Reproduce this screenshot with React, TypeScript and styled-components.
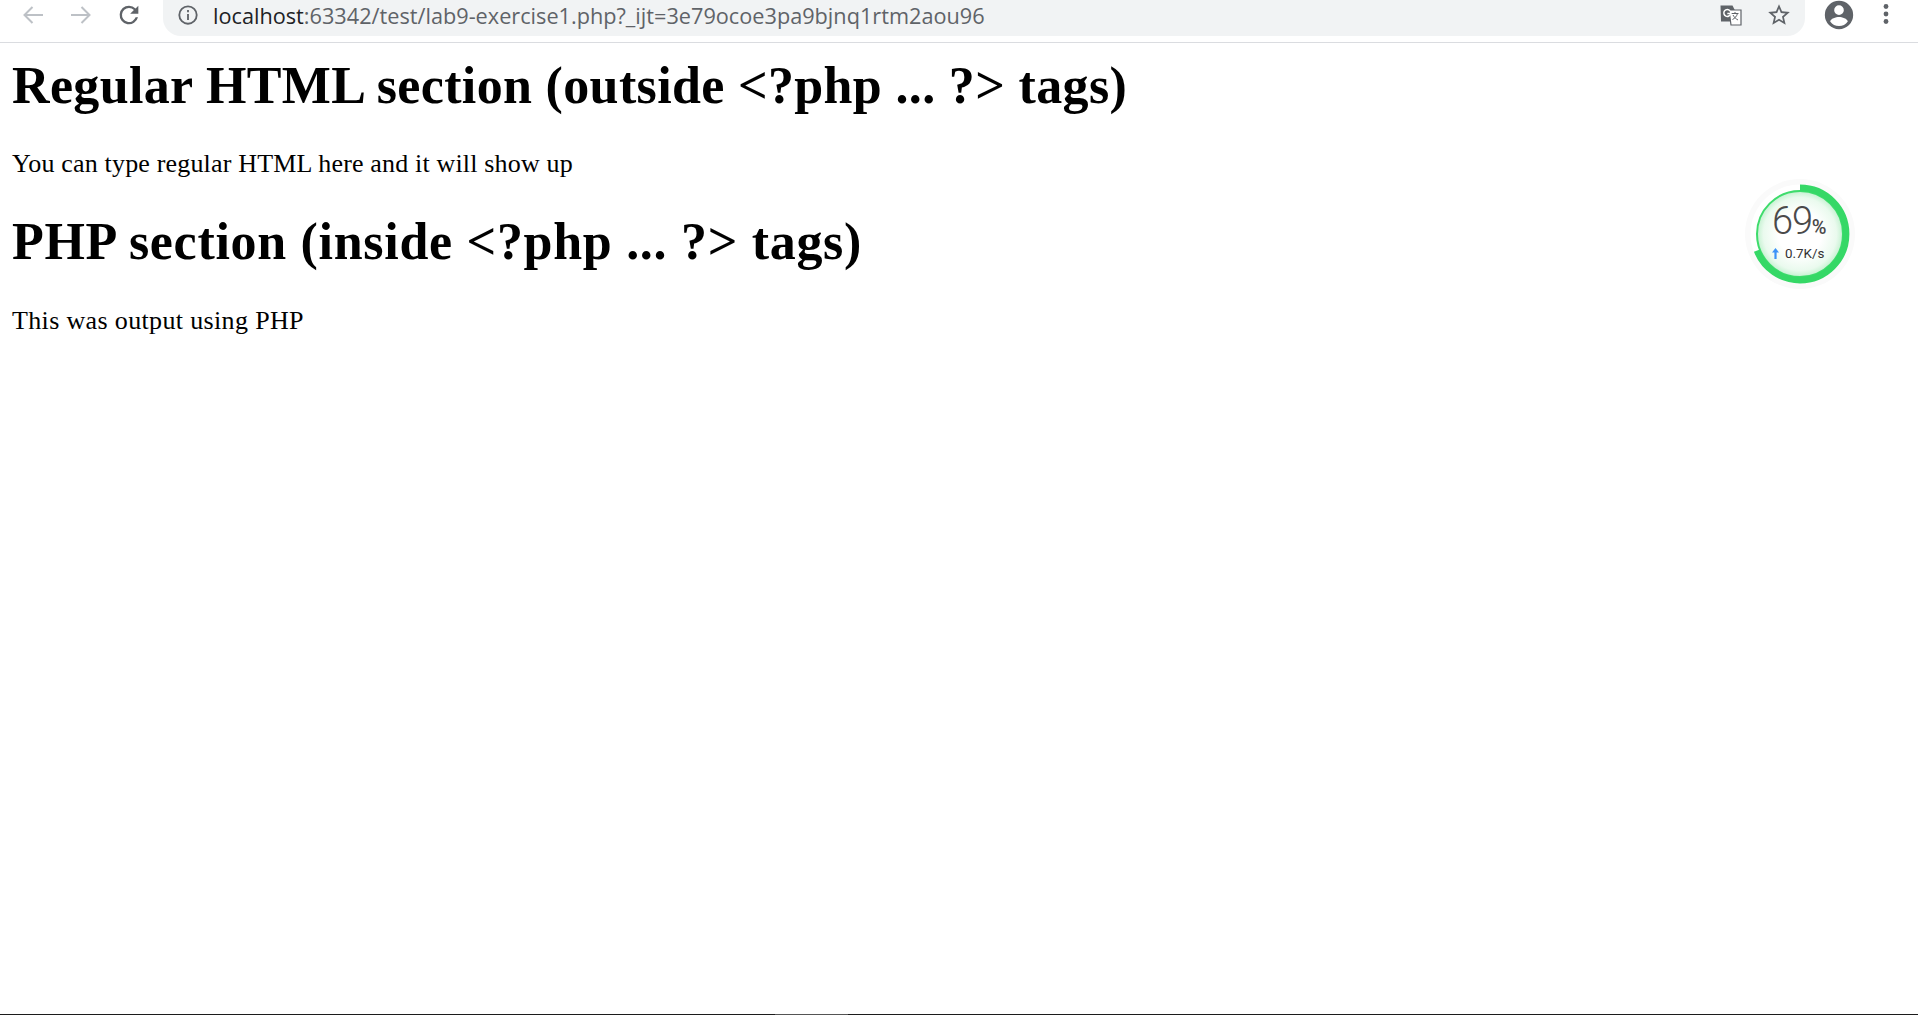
import React from "react";
import styled, { createGlobalStyle } from "styled-components";

const Global = createGlobalStyle`
  html, body { margin: 0; padding: 0; background: #fff; }
  body { height: 1015px; overflow: hidden; }
`;

const Page = styled.div`
  position: relative;
  height: 1015px;
  display: flex;
  flex-direction: column;
  overflow: hidden;
`;

const Toolbar = styled.header`
  height: 42px;
  flex: none;
  display: flex;
  align-items: flex-start;
  border-bottom: 1px solid #dadce0;
  box-sizing: content-box;
`;

const NavButton = styled.span<{ $left: number }>`
  width: 24px;
  height: 24px;
  margin-left: ${(p) => p.$left}px;
  margin-top: 3px;
  flex: none;
  display: flex;
`;

const AddressBar = styled.div`
  flex: none;
  width: 1642px;
  height: 36px;
  margin-left: 23px;
  background: #f1f3f4;
  border-radius: 0 0 18px 18px;
  display: flex;
  align-items: center;
  padding: 0 14px 0 14px;
  box-sizing: border-box;
  font-family: "Open Sans", "Noto Sans", sans-serif;
  font-size: 21.7px;
  color: #5f6368;
  white-space: nowrap;
`;

const Host = styled.span`
  color: #202124;
`;

const Url = styled.div`
  margin-left: 14px;
  margin-top: -6px;
  flex: 1;
`;

const BarIcon = styled.span<{ $gap: number }>`
  margin-left: ${(p) => p.$gap}px;
  margin-top: -6px;
  width: 24px;
  height: 24px;
  display: flex;
  flex: none;
`;

const Content = styled.main`
  padding: 0 12px;
  font-family: "Liberation Serif", serif;
  color: #000;
`;

const Heading = styled.h1<{ $tracking: number; $top: number }>`
  font-size: 52px;
  line-height: 60px;
  font-weight: 700;
  margin: ${(p) => p.$top}px 0 0;
  padding-top: 13px;
  letter-spacing: ${(p) => p.$tracking}px;
  white-space: nowrap;
`;

const Paragraph = styled.p<{ $tracking: number; $top: number }>`
  font-size: 26px;
  line-height: 30px;
  margin: ${(p) => p.$top}px 0 0;
  letter-spacing: ${(p) => p.$tracking}px;
  white-space: nowrap;
`;

const Meter = styled.div`
  position: absolute;
  left: 1744px;
  top: 178px;
  width: 112px;
  height: 112px;
`;

const MeterText = styled.div`
  position: absolute;
  inset: 0;
  font-family: Roboto, "Liberation Sans", sans-serif;
  color: #4a4a4a;
`;

const Percent = styled.div`
  position: absolute;
  left: 28px;
  top: 23px;
  font-size: 38px;
  font-weight: 300;
  line-height: 40px;
  letter-spacing: -1.2px;
  white-space: nowrap;
`;

const PercentSign = styled.span`
  font-size: 20px;
  font-weight: 500;
  letter-spacing: 0;
`;

const Speed = styled.div`
  position: absolute;
  left: 41px;
  top: 68px;
  font-size: 13.4px;
  line-height: 16px;
  color: #333;
  white-space: nowrap;
`;

const Arrow = styled.svg`
  position: absolute;
  left: 28px;
  top: 70px;
`;

const BottomEdge = styled.div`
  position: absolute;
  left: 0;
  right: 0;
  bottom: 0;
  height: 1px;
  background: linear-gradient(to right, #1c1c1c 775px, #555 775px, #555 848px, #1c1c1c 848px);
`;

const circumference = 2 * Math.PI * 46.2;

const App: React.FC = () => (
  <Page>
    <Global />
    <Toolbar>
      <NavButton $left={21}>
        <svg width="24" height="24" viewBox="0 0 24 24" fill="none" stroke="#bdc1c6" strokeWidth="2">
          <path d="M22 12H3.5M11.5 4 3.5 12l8 8" />
        </svg>
      </NavButton>
      <NavButton $left={24}>
        <svg width="24" height="24" viewBox="0 0 24 24" fill="none" stroke="#bdc1c6" strokeWidth="2">
          <path d="M2 12h18.5M12.5 4l8 8-8 8" />
        </svg>
      </NavButton>
      <NavButton $left={23}>
        <svg width="28" height="28" viewBox="0 0 24 24" fill="#5f6368" style={{ margin: "-2px 0 0 -1px", flex: "none" }}>
          <path d="M17.65 6.35A7.96 7.96 0 0 0 12 4a8 8 0 1 0 7.73 10h-2.08A6 6 0 1 1 12 6c1.66 0 3.14.69 4.22 1.78L13 11h7V4l-2.35 2.35z" />
        </svg>
      </NavButton>
      <AddressBar>
        <svg width="22" height="22" viewBox="0 0 24 24" fill="none" stroke="#5f6368" strokeWidth="2" style={{ marginTop: -6, flex: "none" }}>
          <circle cx="12" cy="12" r="9.5" />
          <path d="M12 11v6.5M12 6.5v2.4" />
        </svg>
        <Url>
          <Host>localhost</Host>:63342/test/lab9-exercise1.php?_ijt=3e79ocoe3pa9bjnq1rtm2aou96
        </Url>
        <BarIcon $gap={0}>
          <svg width="24" height="24" viewBox="0 0 24 24">
            <path d="M1.5 2.5h12l2 4v12h-13.5z" fill="#5f6368" />
            <path d="M10 7h12v15H12z" fill="#fff" stroke="#5f6368" strokeWidth="1.2" />
            <path d="M12.5 10.5h7M16 9v1.5M18.5 10.5c-.8 3-3 5-5 6M14 12c1 2 3 4 5 5" fill="none" stroke="#5f6368" strokeWidth="1" />
            <path d="M11 8a3.4 3.4 0 1 0 .6 2.5H8.3" fill="none" stroke="#fff" strokeWidth="1.5" />
          </svg>
        </BarIcon>
        <BarIcon $gap={24}>
          <svg width="26" height="26" viewBox="0 0 24 24" fill="#5f6368" style={{ flex: "none", margin: -1 }}>
            <path d="M22 9.24l-7.19-.62L12 2 9.19 8.63 2 9.24l5.46 4.73L5.82 21 12 17.27 18.18 21l-1.63-7.03L22 9.24zM12 15.4l-3.76 2.27 1-4.28-3.32-2.88 4.38-.38L12 6.1l1.71 4.04 4.38.38-3.32 2.88 1 4.28L12 15.4z" />
          </svg>
        </BarIcon>
      </AddressBar>
      <NavButton $left={22}>
        <svg width="34" height="34" viewBox="0 0 24 24" fill="#5f6368" style={{ margin: "-5px 0 0 -5px", flex: "none" }}>
          <path d="M12 2a10 10 0 1 0 0 20 10 10 0 0 0 0-20zm0 3.2a3.4 3.4 0 1 1 0 6.8 3.4 3.4 0 0 1 0-6.8zm0 14.6a7.6 7.6 0 0 1-6.2-3.2c.1-2 4.1-3.2 6.2-3.2s6.1 1.2 6.2 3.2a7.6 7.6 0 0 1-6.2 3.2z" />
        </svg>
      </NavButton>
      <NavButton $left={23}>
        <svg width="24" height="24" viewBox="0 0 24 24" fill="#5f6368" style={{ marginTop: -1 }}>
          <circle cx="12" cy="4.5" r="2.4" />
          <circle cx="12" cy="12" r="2.4" />
          <circle cx="12" cy="19.5" r="2.4" />
        </svg>
      </NavButton>
    </Toolbar>
    <Content>
      <Heading $tracking={0.35} $top={0}>
        Regular HTML section (outside &lt;?php ... ?&gt; tags)
      </Heading>
      <Paragraph $tracking={0.17} $top={33}>
        You can type regular HTML here and it will show up
      </Paragraph>
      <Heading $tracking={0.7} $top={20}>
        PHP section (inside &lt;?php ... ?&gt; tags)
      </Heading>
      <Paragraph $tracking={0.35} $top={34}>
        This was output using PHP
      </Paragraph>
    </Content>
    <Meter>
      <svg width="112" height="112" viewBox="0 0 112 112">
        <defs>
          <radialGradient id="meterFill" cx="50%" cy="50%" r="50%">
            <stop offset="50%" stopColor="#ffffff" />
            <stop offset="85%" stopColor="#eafaee" />
            <stop offset="100%" stopColor="#c4f1d0" />
          </radialGradient>
        </defs>
        <circle cx="56" cy="56" r="55" fill="#fafafa" />
        <circle cx="56" cy="56" r="49.5" fill="#fff" />
        <circle cx="56" cy="56" r="43" fill="url(#meterFill)" stroke="#3edc6c" strokeWidth="2" />
        <circle
          cx="56"
          cy="56"
          r="46.2"
          fill="none"
          stroke="#35d866"
          strokeWidth="6.4"
          strokeDasharray={`${circumference * 0.69} ${circumference}`}
          transform="rotate(-90 56 56)"
        />
      </svg>
      <MeterText>
        <Percent>
          69<PercentSign>%</PercentSign>
        </Percent>
        <Arrow width="7" height="11" viewBox="0 0 7 11" fill="#3b93f7">
          <path d="M3.5 0 7 4.5H4.6V11H2.4V4.5H0z" />
        </Arrow>
        <Speed>0.7K/s</Speed>
      </MeterText>
    </Meter>
    <BottomEdge />
  </Page>
);

export default App;
